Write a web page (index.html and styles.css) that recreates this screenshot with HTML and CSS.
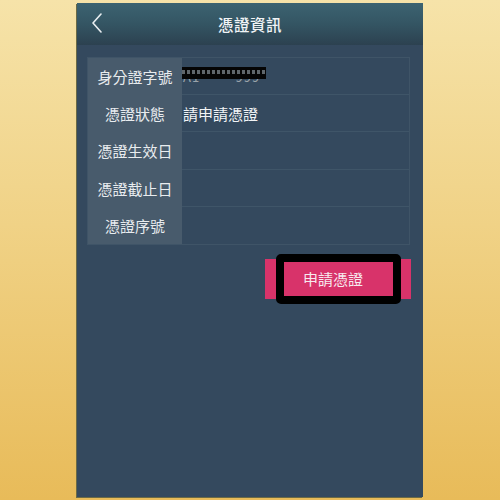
FILE: index.html
```html
<!DOCTYPE html>
<html lang="zh-Hant">
<head>
<meta charset="utf-8">
<link rel="stylesheet" href="styles.css">
</head>
<body>
<div class="phone">
  <header class="topbar">
    <span class="back">
      <svg width="12" height="20" viewBox="0 0 12 20"><polyline points="10,1 2,10 10,19" fill="none" stroke="#e9eef1" stroke-width="1.6" stroke-linecap="round" stroke-linejoin="round"/></svg>
    </span>
    <h1 class="title">憑證資訊</h1>
  </header>
  <main class="content">
    <div class="info">
      <div class="labels">
        <div class="label">身分證字號</div>
        <div class="label">憑證狀態</div>
        <div class="label">憑證生效日</div>
        <div class="label">憑證截止日</div>
        <div class="label">憑證序號</div>
      </div>
      <div class="values">
        <div class="value"><span class="redacted">A1*****999<span class="scribble"></span></span></div>
        <div class="value">請申請憑證</div>
        <div class="value"></div>
        <div class="value"></div>
        <div class="value"></div>
      </div>
    </div>
    <div class="actions">
      <button class="apply">申請憑證<span class="highlight"></span></button>
    </div>
  </main>
</div>
</body>
</html>
```
FILE: styles.css
```css
html, body {
  margin: 0;
  padding: 0;
}
body {
  width: 500px;
  height: 500px;
  overflow: hidden;
  background: linear-gradient(to bottom, #f6e3a9 0%, #f0d286 45%, #e8bb59 100%);
  font-family: "Noto Sans CJK TC", "Noto Sans", sans-serif;
}
.phone {
  width: 346px;
  height: 494px;
  margin: 3px 0 0 77px;
  background: #34495e;
  box-shadow: -1px 1px 0 #6b6a45;
  display: flex;
  flex-direction: column;
}
.topbar {
  height: 42px;
  position: relative;
  display: flex;
  align-items: center;
  justify-content: center;
  background: linear-gradient(to bottom, #3c6371 0%, #345563 50%, #2c4150 100%);
}
.back {
  position: absolute;
  left: 14px;
  top: 10px;
  display: flex;
}
.title {
  margin: 0;
  font-size: 15.5px;
  font-weight: 500;
  color: #f1f4f6;
  letter-spacing: 0.5px;
}
.content {
  padding: 12px 13px 0 10px;
}
.info {
  display: flex;
  border: 1px solid #3f5467;
}
.labels {
  width: 94px;
  background: #485b6c;
  display: flex;
  flex-direction: column;
}
.label {
  height: 37.2px;
  display: flex;
  align-items: center;
  justify-content: center;
  font-size: 15px;
  color: #e8ecef;
}
.values {
  flex: 1;
  display: flex;
  flex-direction: column;
}
.value {
  height: 36.2px;
  border-bottom: 1px solid #3f5568;
  display: flex;
  align-items: center;
  font-size: 15px;
  color: #f2f4f6;
  padding-left: 1px;
}
.value:last-child {
  border-bottom: none;
}
.redacted {
  position: relative;
  color: #9aa3aa;
  font-size: 13px;
  line-height: 14px;
  letter-spacing: 1px;
  margin-top: 2px;
}
.scribble {
  position: absolute;
  left: -1px;
  top: -3px;
  width: 84px;
  height: 12px;
  box-sizing: border-box;
  border-top: 3px solid #050505;
  border-bottom: 5px solid #050505;
  background-color: #050505;
  background-image: repeating-linear-gradient(to right, #5f666b 0 3px, #050505 3px 5px);
  background-clip: padding-box;
}
.actions {
  display: flex;
  justify-content: flex-end;
  margin-top: 14px;
  margin-right: -1px;
}
.apply {
  position: relative;
  width: 146px;
  height: 40px;
  border: none;
  background: #d8336a;
  color: #f7e9ee;
  font-family: "Noto Sans CJK TC", "Noto Sans", sans-serif;
  font-size: 15px;
  padding: 0 10px 0 0;
}
.highlight {
  position: absolute;
  left: 11px;
  top: -5px;
  width: 125px;
  height: 50px;
  box-sizing: border-box;
  border: 8px solid #000;
  border-radius: 5px;
}
```
